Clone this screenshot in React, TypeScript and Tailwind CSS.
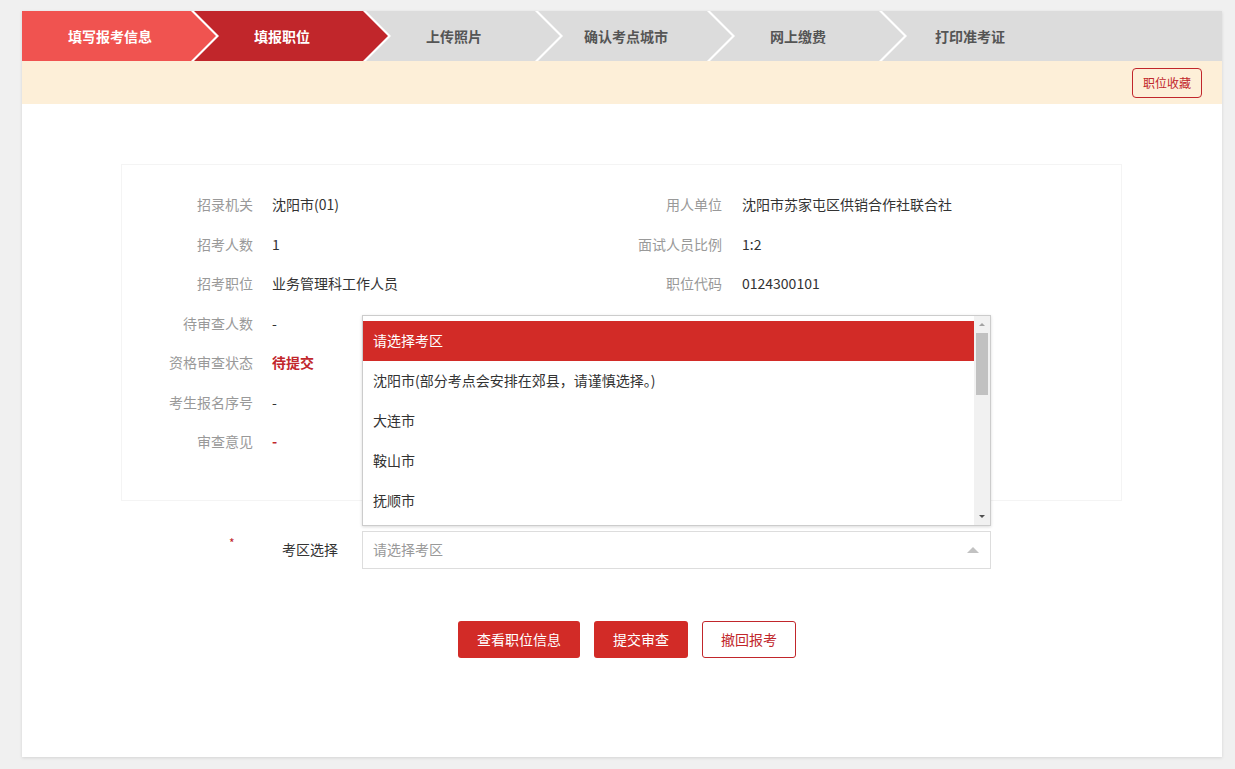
import React from "react";

const steps = [
  { label: "填写报考信息", bg: "bg-[#f05350]", text: "text-white" },
  { label: "填报职位", bg: "bg-[#c1262b]", text: "text-white" },
  { label: "上传照片", bg: "bg-[#dcdcdc]", text: "text-[#555555]" },
  { label: "确认考点城市", bg: "bg-[#dcdcdc]", text: "text-[#555555]" },
  { label: "网上缴费", bg: "bg-[#dcdcdc]", text: "text-[#555555]" },
];

const leftRows: { label: string; value: string; red?: boolean; bold?: boolean }[] = [
  { label: "招录机关", value: "沈阳市(01)" },
  { label: "招考人数", value: "1" },
  { label: "招考职位", value: "业务管理科工作人员" },
  { label: "待审查人数", value: "-" },
  { label: "资格审查状态", value: "待提交", red: true, bold: true },
  { label: "考生报名序号", value: "-" },
  { label: "审查意见", value: "-", red: true, bold: true },
];

const rightRows = [
  { label: "用人单位", value: "沈阳市苏家屯区供销合作社联合社" },
  { label: "面试人员比例", value: "1:2" },
  { label: "职位代码", value: "0124300101" },
];

const options = [
  "请选择考区",
  "沈阳市(部分考点会安排在郊县，请谨慎选择。)",
  "大连市",
  "鞍山市",
  "抚顺市",
];

export default function App() {
  return (
    <div className="h-[769px] overflow-hidden bg-[#f0f0f0] pt-[11px] font-['Noto_Sans_CJK_SC','Microsoft_YaHei',sans-serif]">
      <div className="ml-[22px] w-[1200px] bg-white shadow-[0_1px_3px_rgba(0,0,0,0.12)]">
        {/* Steps bar */}
        <div className="flex h-[50px] bg-white overflow-hidden">
          {steps.map((s, i) => (
            <div
              key={s.label}
              className={
                i === 0
                  ? `${s.bg} ${s.text} w-[194px] shrink-0 flex items-center justify-center pl-[25px] pr-[43px] text-[14px] font-bold [clip-path:polygon(0_0,calc(100%_-_25px)_0,100%_50%,calc(100%_-_25px)_100%,0_100%)]`
                  : `${s.bg} ${s.text} w-[194px] shrink-0 -ml-[22px] flex items-center justify-center pl-[25px] pr-[43px] text-[14px] font-bold [clip-path:polygon(0_0,calc(100%_-_25px)_0,100%_50%,calc(100%_-_25px)_100%,0_100%,25px_50%)]`
              }
            >
              <span className="whitespace-nowrap">{s.label}</span>
            </div>
          ))}
          <div className="flex-1 -ml-[22px] bg-[#dcdcdc] text-[#555555] text-[14px] font-bold flex items-center [clip-path:polygon(0_0,100%_0,100%_100%,0_100%,25px_50%)]">
            <div className="w-[194px] flex justify-center pl-[25px] pr-[43px]">
              <span className="whitespace-nowrap">打印准考证</span>
            </div>
          </div>
        </div>

        {/* Cream band */}
        <div className="h-[43px] bg-[#fdefd8] flex items-center justify-end pr-[20px]">
          <button className="h-[30px] w-[70px] rounded-[4px] border border-[#c1262b] text-[#c1262b] text-[12px] bg-transparent">
            职位收藏
          </button>
        </div>

        {/* Body */}
        <div className="pt-[60px] pb-[99px]">
          <div className="ml-[99px] mr-[100px] border border-[#f4f4f4] pt-[20px] pb-[38px]">
            {leftRows.map((r, i) => (
              <div key={r.label} className="flex h-[39.5px] items-center text-[14px]">
                <div className="flex w-[480px] items-center">
                  <div className="w-[131px] text-right text-[#999999] whitespace-nowrap">{r.label}</div>
                  <div
                    className={`ml-[19px] whitespace-nowrap ${r.red ? "text-[#c1262b]" : "text-[#333333]"} ${r.bold ? "font-bold" : ""}`}
                  >
                    {r.value}
                  </div>
                </div>
                {rightRows[i] && (
                  <div className="flex items-center">
                    <div className="w-[120px] text-right text-[#999999] whitespace-nowrap">{rightRows[i].label}</div>
                    <div className="ml-[20px] text-[#333333] whitespace-nowrap">{rightRows[i].value}</div>
                  </div>
                )}
              </div>
            ))}
          </div>

          {/* Form row */}
          <div className="mt-[30px] flex items-center h-[38px]">
            <div className="w-[205px] shrink-0" />
            <div className="w-[55px] shrink-0 self-start text-[#c1262b] text-[12px] leading-none pt-[6px] pl-[2px]">*</div>
            <div className="w-[55px] shrink-0 text-[14px] text-[#333333] whitespace-nowrap">考区选择</div>
            <div className="ml-[25px] relative w-[629px] shrink-0">
              {/* Dropdown list */}
              <div className="absolute left-0 right-0 bottom-[calc(100%_+_5px)] h-[211px] bg-white border border-[#cccccc] shadow-[0_1px_3px_rgba(0,0,0,0.15)] flex">
                <div className="flex-1 pt-[5px] overflow-hidden">
                  {options.map((o, i) => (
                    <div
                      key={o}
                      className={`h-[40px] flex items-center pl-[10px] text-[14px] whitespace-nowrap ${
                        i === 0 ? "bg-[#d22b27] text-white" : "text-[#333333]"
                      }`}
                    >
                      {o}
                    </div>
                  ))}
                </div>
                {/* Scrollbar */}
                <div className="w-[16px] bg-[#f1f1f1] flex flex-col items-center">
                  <div className="h-[17px] flex items-center justify-center">
                    <div className="w-0 h-0 border-l-[3px] border-r-[3px] border-b-[3px] border-l-transparent border-r-transparent border-b-[#a3a3a3]" />
                  </div>
                  <div className="w-[12px] h-[62px] bg-[#c1c1c1]" />
                  <div className="flex-1" />
                  <div className="h-[17px] flex items-center justify-center">
                    <div className="w-0 h-0 border-l-[3px] border-r-[3px] border-t-[3px] border-l-transparent border-r-transparent border-t-[#505050]" />
                  </div>
                </div>
              </div>
              {/* Select box */}
              <div className="h-[38px] border border-[#dddddd] bg-white flex items-center pl-[10px] pr-[10px]">
                <span className="flex-1 text-[14px] text-[#999999]">请选择考区</span>
                <div className="w-0 h-0 border-l-[6px] border-r-[6px] border-b-[6px] border-l-transparent border-r-transparent border-b-[#c2c2c2] mr-[1px]" />
              </div>
            </div>
          </div>

          {/* Buttons */}
          <div className="mt-[52px] flex justify-center gap-[14px] pl-[10px]">
            <button className="h-[37px] w-[122px] rounded-[3px] bg-[#d22b27] text-white text-[14px]">查看职位信息</button>
            <button className="h-[37px] w-[94px] rounded-[3px] bg-[#d22b27] text-white text-[14px]">提交审查</button>
            <button className="h-[37px] w-[94px] rounded-[3px] border border-[#c1262b] bg-white text-[#c1262b] text-[14px]">撤回报考</button>
          </div>
        </div>
      </div>
    </div>
  );
}
